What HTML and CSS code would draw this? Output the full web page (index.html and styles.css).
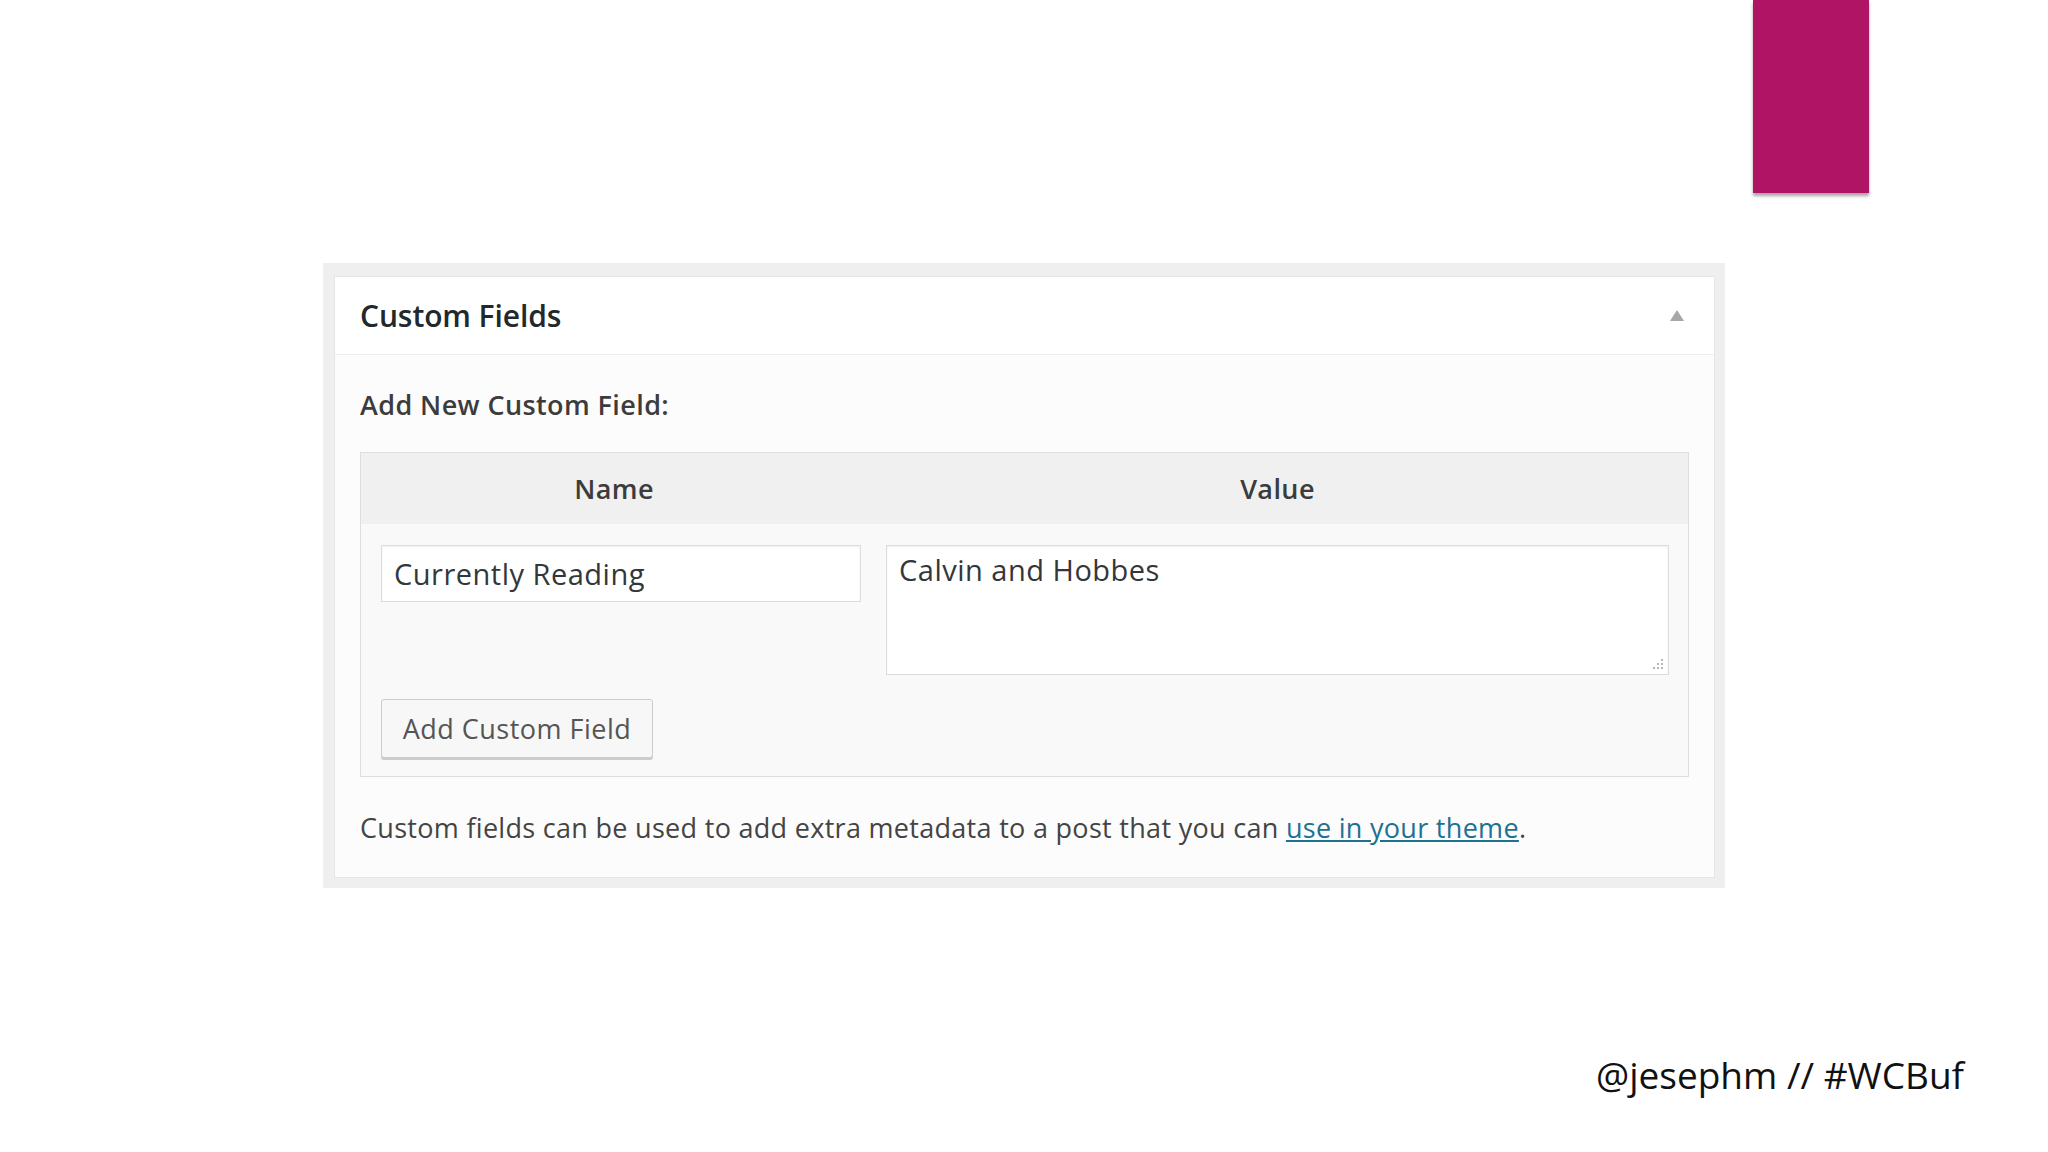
FILE: index.html
```html
<!DOCTYPE html>
<html>
<head>
<meta charset="utf-8">
<link rel="stylesheet" href="styles.css">
</head>
<body>
<div class="slide">
  <div class="accent"></div>
  <div class="frame">
    <div class="panel">
      <div class="panel-head">
        <h2 class="panel-title">Custom Fields</h2>
        <span class="toggle"></span>
      </div>
      <div class="panel-body">
        <p class="add-label">Add New Custom Field:</p>
        <div class="meta-table">
          <div class="th">Name</div>
          <div class="th">Value</div>
          <div class="td td-name"><input class="field-input" type="text" value="Currently Reading"></div>
          <div class="td td-value">
            <div class="ta-wrap">
              <textarea class="field-textarea">Calvin and Hobbes</textarea>
              <svg class="grip" width="14" height="14" viewBox="0 0 14 14">
                <g fill="#b5b5b5">
                  <rect x="10" y="2" width="2" height="2"/>
                  <rect x="6" y="6" width="2" height="2"/>
                  <rect x="10" y="6" width="2" height="2"/>
                  <rect x="2" y="10" width="2" height="2"/>
                  <rect x="6" y="10" width="2" height="2"/>
                  <rect x="10" y="10" width="2" height="2"/>
                </g>
              </svg>
            </div>
          </div>
          <div class="td td-submit"><button class="btn" type="button">Add Custom Field</button></div>
        </div>
        <p class="note">Custom fields can be used to add extra metadata to a post that you can <a href="#" class="note-link">use in your theme</a>.</p>
      </div>
    </div>
  </div>
  <div class="handle">@jesephm // #WCBuf</div>
</div>
</body>
</html>
```
FILE: styles.css
```css
html, body {
  margin: 0;
  padding: 0;
  background: #ffffff;
}

.slide {
  width: 2048px;
  height: 1152px;
  display: flex;
  flex-direction: column;
  align-items: flex-start;
  font-family: "Open Sans", "Noto Sans", sans-serif;
  overflow: hidden;
}

.accent {
  width: 116px;
  height: 193px;
  margin-left: 1753px;
  background: #b01464;
  box-shadow: 0 3px 3px rgba(0, 0, 0, 0.35);
  flex: none;
}

.frame {
  margin: 70px 0 0 323px;
  width: 1402px;
  box-sizing: border-box;
  padding: 13px 10px 10px 11px;
  background: #efefef;
  flex: none;
}

.panel {
  background: #fcfcfc;
  border: 1px solid #e6e6e6;
}

.panel-head {
  height: 77px;
  display: flex;
  align-items: center;
  justify-content: space-between;
  padding: 0 30px 0 25px;
  background: #ffffff;
  border-bottom: 1px solid #eeeeee;
}

.panel-title {
  margin: 0;
  font-size: 30px;
  font-weight: 600;
  color: #23282d;
  letter-spacing: -0.1px;
}

.toggle {
  width: 0;
  height: 0;
  border-left: 7px solid transparent;
  border-right: 7px solid transparent;
  border-bottom: 11px solid #a7a7a7;
}

.panel-body {
  padding: 0 25px 31px 25px;
}

.add-label {
  margin: 32px 0 29px 0;
  font-size: 27px;
  line-height: 36px;
  font-weight: 600;
  color: #3c3c3c;
  letter-spacing: 0.4px;
}

.meta-table {
  display: grid;
  grid-template-columns: 506px 1fr;
  border: 1px solid #dedede;
  background: #f9f9f9;
}

.th {
  height: 71px;
  display: flex;
  align-items: center;
  justify-content: center;
  background: #f0f0f0;
  font-size: 27px;
  font-weight: 600;
  color: #3c3c3c;
  letter-spacing: 0.4px;
}

.td-name {
  padding: 21px 0 0 20px;
}

.td-value {
  padding: 21px 19px 0 19px;
}

.field-input {
  display: block;
  width: 480px;
  height: 57px;
  box-sizing: border-box;
  margin: 0;
  padding: 0 12px;
  border: 1px solid #dcdcdc;
  box-shadow: inset 0 1px 2px rgba(0, 0, 0, 0.07);
  background: #ffffff;
  font-family: "Open Sans", "Noto Sans", sans-serif;
  font-size: 29px;
  color: #32373c;
  letter-spacing: 0.5px;
  outline: none;
}

.ta-wrap {
  position: relative;
}

.field-textarea {
  display: block;
  width: 100%;
  height: 130px;
  box-sizing: border-box;
  margin: 0;
  padding: 5px 12px;
  border: 1px solid #dcdcdc;
  box-shadow: inset 0 1px 2px rgba(0, 0, 0, 0.07);
  background: #ffffff;
  font-family: "Open Sans", "Noto Sans", sans-serif;
  font-size: 29px;
  line-height: 38px;
  color: #32373c;
  letter-spacing: 0.5px;
  resize: none;
  outline: none;
}

.grip {
  position: absolute;
  right: 4px;
  bottom: 4px;
}

.td-submit {
  grid-column: 1 / 3;
  padding: 24px 0 18px 20px;
}

.btn {
  display: block;
  width: 272px;
  height: 59px;
  box-sizing: border-box;
  margin: 0;
  padding: 0;
  border: 1px solid #cccccc;
  border-radius: 3px;
  background: #f7f7f7;
  box-shadow: 0 2px 0 #cccccc;
  font-family: "Open Sans", "Noto Sans", sans-serif;
  font-size: 27px;
  color: #555555;
  letter-spacing: 0.5px;
}

.note {
  margin: 33px 0 0 0;
  font-size: 27px;
  line-height: 36px;
  color: #444444;
  letter-spacing: 0.3px;
}

.note-link {
  color: #1e7191;
  text-decoration: underline;
}

.handle {
  margin: 165px 0 0 1596px;
  font-family: "Open Sans", "Noto Sans", sans-serif;
  font-size: 37px;
  line-height: 44px;
  color: #111111;
  white-space: nowrap;
  flex: none;
}
```
